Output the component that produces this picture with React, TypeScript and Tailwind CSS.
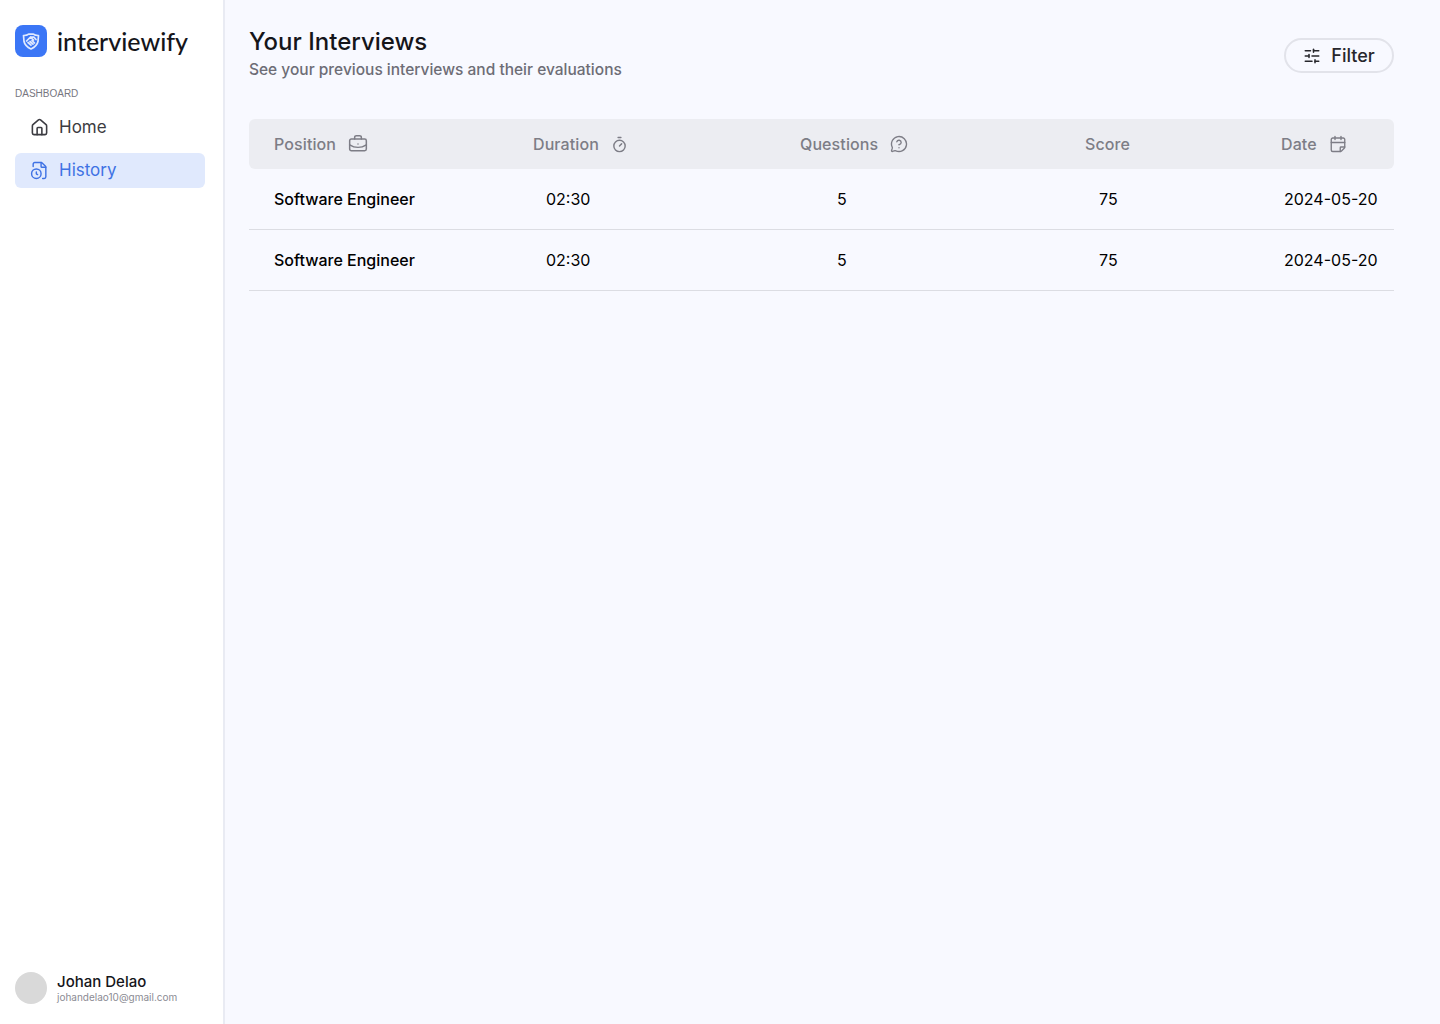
import React from 'react';
import { BriefcaseBusiness, CalendarFold, FileClock, Home, MessageCircleQuestion, SlidersHorizontal, Timer } from 'lucide-react';

const ROWS = [
  { position: 'Software Engineer', duration: '02:30', questions: '5', score: '75', date: '2024-05-20' },
  { position: 'Software Engineer', duration: '02:30', questions: '5', score: '75', date: '2024-05-20' },
];

const COLUMNS = 'grid grid-cols-[259px_267px_285px_196px_1fr]';

const Logo = () => (
  <div className="w-8 h-8 rounded-lg bg-[#3b76f6] flex items-center justify-center">
    <svg width="20" height="20" viewBox="0 0 20 20" fill="none" stroke="#dfe9fe" strokeWidth="1.7" strokeLinejoin="round" strokeLinecap="round">
      <path d="M2.5 4.5 Q6 4.6 7.6 3.2 L12.4 3.2 Q14 4.6 17.5 4.5 L17 10.5 Q16 15 10 18 Q4 15 3 10.5 Z" />
      <path d="M5.5 10 L9.5 6.2 L12.5 9 M9.5 6.2 L13 6.2 L15 8.5 M7 11.5 L10 14.2 M9 10.5 L12 13.2 M11 9.5 L13.5 12" />
    </svg>
  </div>
);

const HeaderCell = ({ label, icon }: { label: string; icon?: React.ReactNode }) => (
  <div className="flex items-center gap-3 pl-[25px] text-[#7d7d86] text-base font-medium font-['Inter',sans-serif]">
    <span className="tracking-[0.1px]">{label}</span>
    {icon}
  </div>
);

const App: React.FC = () => {
  return (
    <div className="flex h-[1024px] w-[1440px] overflow-hidden bg-[#f8f9ff] font-['Inter',sans-serif]">
      {/* Sidebar */}
      <aside className="w-[225px] shrink-0 h-full bg-white border-r-2 border-[#e9ebf3] flex flex-col px-[15px]">
        <div className="flex items-center gap-[10px] pt-[25px]">
          <Logo />
          <span className="text-[25px] leading-8 font-medium text-[#15151a] font-['Lato',sans-serif]">interviewify</span>
        </div>
        <p className="mt-[29px] text-[10px] leading-4 text-[#77777f] font-['Liberation_Sans',sans-serif]">DASHBOARD</p>
        <nav className="mt-[8px] flex flex-col gap-[8px] w-[190px]">
          <a className="h-[35px] flex items-center gap-[10px] pl-[15px] text-[17px] text-[#3c3c42]">
            <Home size={19} strokeWidth={2} />
            <span>Home</span>
          </a>
          <a className="h-[35px] flex items-center gap-[10px] pl-[15px] text-[17px] text-[#3f72e4] bg-[#e0e9fd] rounded-md">
            <FileClock size={19} strokeWidth={1.8} />
            <span>History</span>
          </a>
        </nav>
        <div className="mt-auto mb-[20px] flex items-center gap-[10px]">
          <div className="w-8 h-8 rounded-full bg-[#d9d9d9]" />
          <div className="flex flex-col">
            <span className="text-[15px] leading-[18px] font-medium text-[#15151a]">Johan Delao</span>
            <span className="text-[10px] leading-3 text-[#8b8b93]">johandelao10@gmail.com</span>
          </div>
        </div>
      </aside>

      {/* Main */}
      <main className="flex-1 pl-[24px] pr-[46px]">
        <div className="flex justify-between items-start pt-[26px]">
          <div>
            <h1 className="text-[24px] leading-8 font-medium text-[#15151a]">Your Interviews</h1>
            <p className="mt-[2px] text-[15.5px] leading-5 font-medium text-[#6d6d76]">See your previous interviews and their evaluations</p>
          </div>
          <button className="mt-[12px] w-[110px] h-[35px] rounded-full border-2 border-[#e2e3ea] flex items-center justify-center gap-[10px] text-[18px] font-medium text-[#27272c]">
            <SlidersHorizontal size={18} strokeWidth={2} />
            <span>Filter</span>
          </button>
        </div>

        <div className={`${COLUMNS} mt-[39px] h-[50px] rounded-md bg-[#ecedf2]`}>
          <HeaderCell label="Position" icon={<BriefcaseBusiness size={20} strokeWidth={1.8} />} />
          <HeaderCell label="Duration" icon={<Timer size={17} strokeWidth={2} />} />
          <HeaderCell label="Questions" icon={<MessageCircleQuestion size={18} strokeWidth={1.8} />} />
          <HeaderCell label="Score" />
          <HeaderCell label="Date" icon={<CalendarFold size={18} strokeWidth={1.8} />} />
        </div>

        {ROWS.map((r, i) => (
          <div key={i} className={`${COLUMNS} h-[61px] items-center border-b border-[#dcdde3] text-base text-black`}>
            <span className="pl-[25px] font-medium">{r.position}</span>
            <span className="pl-[38px]">{r.duration}</span>
            <span className="pl-[62px]">{r.questions}</span>
            <span className="pl-[39px]">{r.score}</span>
            <span className="pl-[28px]">{r.date}</span>
          </div>
        ))}
      </main>
    </div>
  );
};

export default App;
